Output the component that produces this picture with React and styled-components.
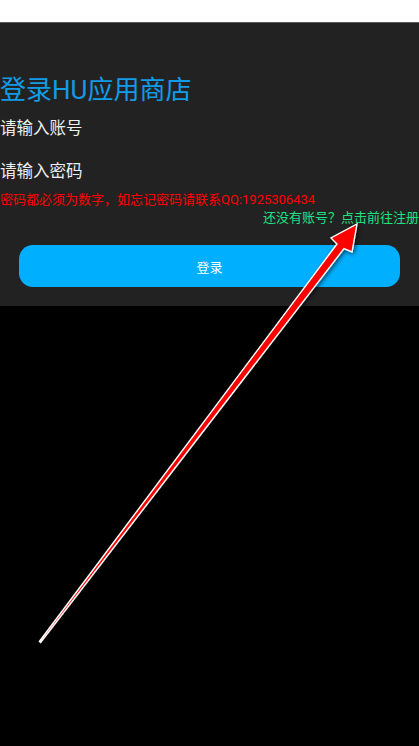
import React from 'react';
import styled, { createGlobalStyle } from 'styled-components';

const GlobalStyle = createGlobalStyle`
  html, body {
    margin: 0;
    padding: 0;
    background: #000000;
  }
  body {
    font-family: Roboto, "Noto Sans CJK SC", sans-serif;
  }
`;

const Screen = styled.div`
  position: relative;
  width: 419px;
  height: 746px;
  overflow: hidden;
  background: #000000;
`;

const StatusBar = styled.div`
  height: 22px;
  background: #ffffff;
  border-bottom: 1px solid #5a5a5a;
`;

const Panel = styled.div`
  display: flex;
  flex-direction: column;
  background: #222222;
  padding: 52px 0 19px 0;
`;

const Title = styled.h1`
  margin: 0;
  font-size: 26px;
  font-weight: 400;
  line-height: 30px;
  color: #129ce8;
`;

const Field = styled.div`
  display: flex;
  align-items: center;
  height: 43px;
  font-size: 16.5px;
  color: #eeeeee;
`;

const Note = styled.div`
  font-size: 13px;
  line-height: ${({ $lh }) => $lh || 17}px;
  color: ${({ $color }) => $color};
  text-align: ${({ $align }) => $align || 'left'};
  white-space: nowrap;
`;

const LoginButton = styled.button`
  margin: 18px 19px 0 19px;
  height: 42px;
  border: none;
  border-radius: 14px;
  background: #00b0ff;
  color: #ffffff;
  font-family: Roboto, "Noto Sans CJK SC", sans-serif;
  font-size: 13px;
  cursor: pointer;
`;

const Overlay = styled.svg`
  position: absolute;
  left: 0;
  top: 0;
  width: 419px;
  height: 746px;
  pointer-events: none;
`;

const Arrow = () => (
  <Overlay viewBox="0 0 419 746">
    <defs>
      <filter id="shadow" x="-20%" y="-20%" width="140%" height="140%">
        <feDropShadow dx="1.5" dy="1.5" stdDeviation="2" floodColor="#000" floodOpacity="0.6" />
      </filter>
    </defs>
    <polygon
      points="357,224 352,252 344,248.5 40.6,642.5 39.4,641.5 337,244 331,238"
      fill="#ff0000"
      stroke="#ffffff"
      strokeWidth="1.4"
      strokeLinejoin="miter"
      filter="url(#shadow)"
    />
  </Overlay>
);

export default function App() {
  return (
    <>
      <GlobalStyle />
      <Screen>
        <StatusBar />
        <Panel>
          <Title>登录HU应用商店</Title>
          <Field>请输入账号</Field>
          <Field>请输入密码</Field>
          <Note $color="#ff0000">密码都必须为数字，如忘记密码请联系QQ:1925306434</Note>
          <Note $color="#1ee383" $align="right" $lh={19}>还没有账号？点击前往注册</Note>
          <LoginButton>登录</LoginButton>
        </Panel>
        <Arrow />
      </Screen>
    </>
  );
}
